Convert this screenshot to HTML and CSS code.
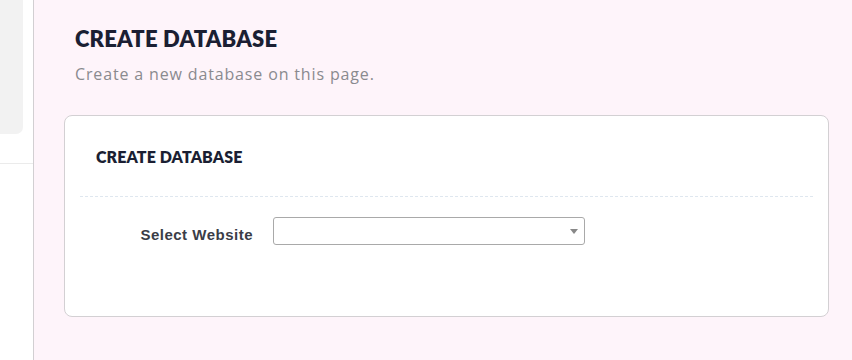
FILE: index.html
```html
<!DOCTYPE html>
<html lang="en">
<head>
<meta charset="UTF-8"/>
<title>Create Database</title>
<link rel="stylesheet" href="styles.css">
</head>
<body>
<div class="layout">
  <aside class="sidebar">
    <div class="side-box"></div>
    <div class="side-line"></div>
  </aside>
  <main class="content">
    <div class="page-head">
      <h1>CREATE DATABASE</h1>
      <p class="subtitle">Create a new database on this page.</p>
    </div>
    <section class="card">
      <div class="card-head">
        <h2>CREATE DATABASE</h2>
      </div>
      <div class="card-body">
        <div class="form-row">
          <label class="form-label" for="website">Select Website</label>
          <div class="select-wrap">
            <select id="website"></select>
            <span class="caret"></span>
          </div>
        </div>
      </div>
    </section>
  </main>
</div>
</body>
</html>
```

FILE: styles.css
```css
* {
  box-sizing: border-box;
}
html, body {
  margin: 0;
  padding: 0;
  height: 100%;
  overflow: hidden;
}
body {
  font-family: Lato, "Open Sans", sans-serif;
  background: #fef4fa;
}
.layout {
  display: flex;
  height: 100vh;
}
.sidebar {
  width: 34px;
  flex-shrink: 0;
  background: #fff;
  border-right: 1px solid #d2cfd2;
}
.side-box {
  width: 23px;
  height: 134px;
  background: #f2f2f2;
  border-bottom-right-radius: 7px;
}
.side-line {
  margin-top: 29px;
  border-top: 1px solid #ebebeb;
}
.content {
  flex: 1;
  padding: 0 23px 0 30px;
}
.page-head {
  padding: 25px 0 0 11px;
  height: 115px;
}
h1 {
  margin: 0;
  font-size: 22px;
  font-weight: 800;
  color: #1b1f33;
  letter-spacing: 0.2px;
  line-height: 28px;
}
.subtitle {
  margin: 11px 0 0;
  font-family: "Open Sans", Lato, sans-serif;
  font-size: 16px;
  color: #8a8a8f;
  letter-spacing: 0.85px;
  line-height: 20px;
}
.card {
  background: #fff;
  border: 1px solid #d3d0d3;
  border-radius: 8px;
  height: 202px;
}
.card-head {
  margin: 0 15px;
  height: 81px;
  padding: 0 16px;
  display: flex;
  align-items: center;
  border-bottom: 1px dashed #dfe7ef;
}
h2 {
  margin: 0;
  font-size: 16px;
  font-weight: 800;
  color: #1b1f33;
  letter-spacing: 0.1px;
}
.card-body {
  padding: 20px 0 0;
}
.form-row {
  display: flex;
  align-items: flex-start;
}
.form-label {
  width: 208px;
  text-align: right;
  padding: 9px 20px 0 0;
  font-family: "Liberation Sans", Arial, sans-serif;
  font-size: 15px;
  font-weight: 700;
  letter-spacing: 0.5px;
  color: #3a3d47;
}
.select-wrap {
  position: relative;
  width: 312px;
  height: 28px;
}
select {
  appearance: none;
  width: 100%;
  height: 100%;
  border: 1px solid #a9a9a9;
  border-radius: 3px;
  background: #fff;
  margin: 0;
}
.caret {
  position: absolute;
  right: 7px;
  top: 12px;
  width: 0;
  height: 0;
  border-left: 4px solid transparent;
  border-right: 4px solid transparent;
  border-top: 5px solid #888;
}
```
